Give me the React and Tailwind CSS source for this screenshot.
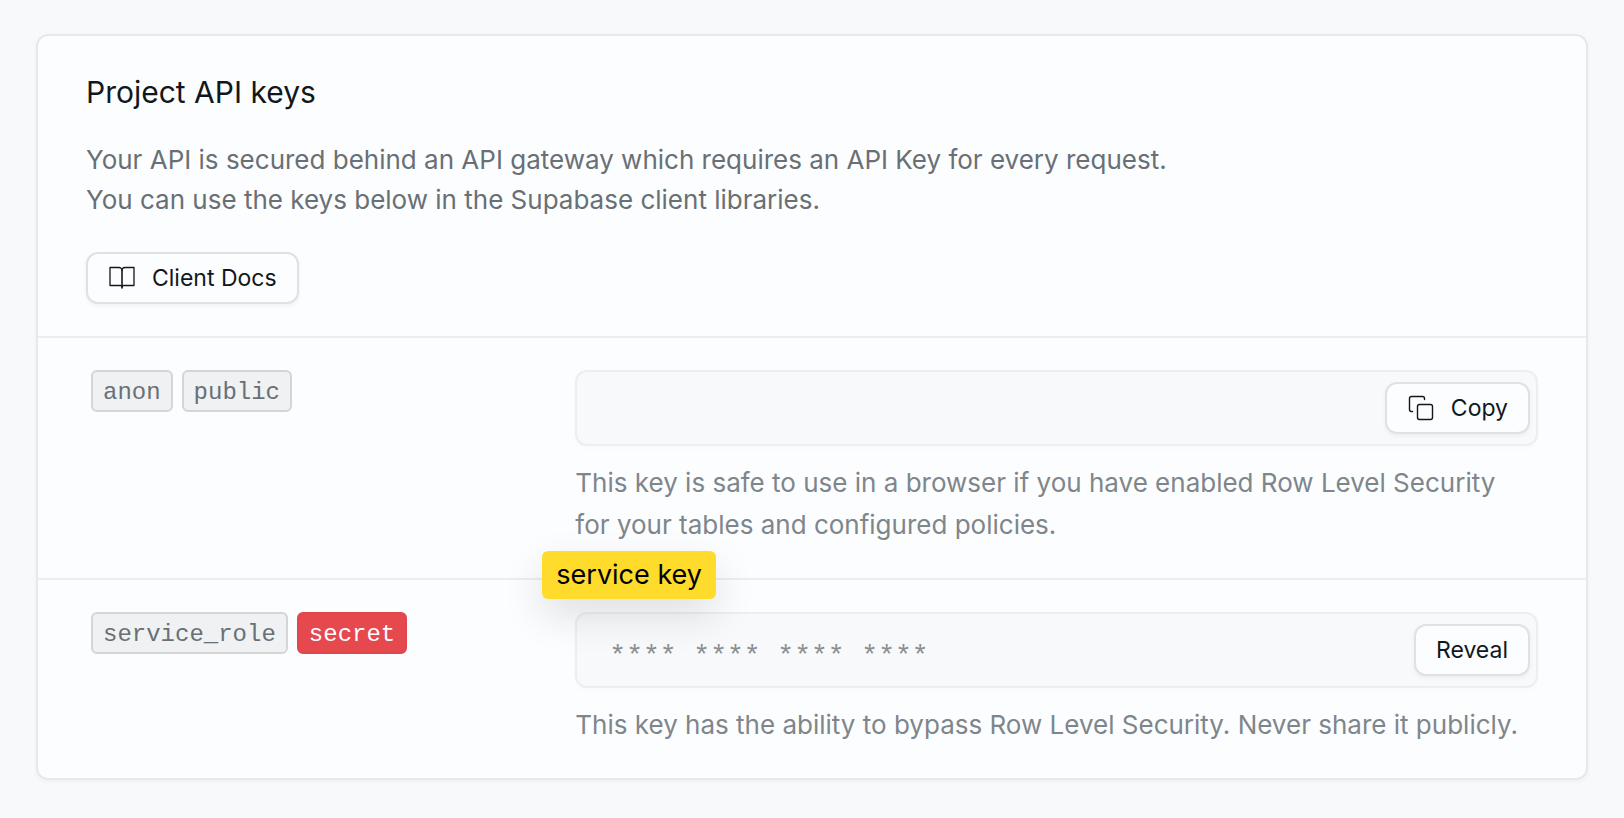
import React from "react";

const SANS = "font-['Inter','Liberation_Sans',sans-serif]";
const MONO = "font-['Liberation_Mono',monospace]";

function BookIcon() {
  return (
    <svg aria-hidden="true" viewBox="0 0 28 28" className="h-7 w-7 shrink-0" fill="none" stroke="currentColor" strokeWidth="1.3" strokeLinejoin="round" strokeLinecap="round">
      <path d="M14 6.500a3 3 0 0 0-3-3H2v18h10.500a1.500 1.500 0 0 1 1.500 1.500 1.500 1.500 0 0 1 1.500-1.500H26v-18h-9a3 3 0 0 0-3 3" />
      <path d="M14 6.500V24" strokeWidth="1.600" />
    </svg>
  );
}

function CopyIcon() {
  return (
    <svg aria-hidden="true" viewBox="0 0 28 28" className="h-7 w-7 shrink-0" fill="none" stroke="currentColor" strokeWidth="1.4" strokeLinecap="round">
      <rect x="10.500" y="10.500" width="15" height="15" rx="2" />
      <path d="M5.500 17.500H4.500a2 2 0 0 1-2-2v-11a2 2 0 0 1 2-2h11a2 2 0 0 1 2 2v1" />
    </svg>
  );
}

function Button({ icon, children }) {
  return (
    <button type="button" className="flex h-[52px] shrink-0 items-center gap-4 rounded-xl border-2 border-[#dfe1e4] bg-[#fcfdfe] px-5 text-[23px] leading-8 text-[#11181c] shadow-[0_2px_4px_rgba(0,0,0,0.05)]">
      {icon}
      {children}
    </button>
  );
}

function Tag({ danger, children }) {
  const tone = danger
    ? "border-[#e0474c] bg-[#e5484d] text-[#fcfdfe]"
    : "border-[#d3d5d6] bg-[#f0f1f2] text-[#687076]";
  return (
    <code className={`${MONO} flex h-[42px] items-center rounded-md border-2 px-[10px] pt-1 text-[24px] leading-8 ${tone}`}>
      {children}
    </code>
  );
}

function KeyRow({ id, tags, value, action, help, children }) {
  return (
    <div className="grid grid-cols-12 gap-4 border-t-2 border-[#ebedef] px-12 py-8">
      <label htmlFor={id} className="col-span-4 flex items-start gap-[9px] pl-[5px]">
        {tags}
      </label>
      <div className="relative col-span-8">
        <div className="flex h-[76px] items-center rounded-xl border-2 border-[#eceef0] bg-[#f8f9fa] pr-1.5 shadow-[0_2px_4px_rgba(0,0,0,0.02)]">
          <input id={id} type="text" readOnly value={value} aria-describedby={`${id}-help`} className={`${MONO} h-full min-w-0 flex-1 bg-transparent pt-3 pl-8 text-[28px] text-[#8b8f91] outline-none`} />
          {action}
        </div>
        <p id={`${id}-help`} className="mt-4 text-[26px] leading-[42px] text-[#7e868c]">
          {help}
        </p>
        {children}
      </div>
    </div>
  );
}

export default function App() {
  return (
    <main className={`${SANS} min-h-screen bg-[#f8f9fb] px-9 pt-[34px] pb-[38px]`}>
      <section className="rounded-xl border-2 border-[#e6e8eb] bg-[#fcfdfe] shadow-[0_2px_4px_rgba(0,0,0,0.04)]">
        <header className="px-12 py-8">
          <h1 className="text-[30px] leading-[48px] text-[#11181c]">Project API keys</h1>
          <p className="mt-6 mb-8 text-[26px] leading-10 text-[#687076]">
            Your API is secured behind an API gateway which requires an API Key for every request.
            <br />
            You can use the keys below in the Supabase client libraries.
          </p>
          <div className="flex">
            <Button icon={<BookIcon />}>Client Docs</Button>
          </div>
        </header>
        <KeyRow
          id="anon-key"
          tags={<><Tag>anon</Tag><Tag>public</Tag></>}
          value=""
          action={<Button icon={<CopyIcon />}>Copy</Button>}
          help={<>This key is safe to use in a browser if you have enabled Row Level Security<br />for your tables and configured policies.</>}
        />
        <KeyRow
          id="service-key"
          tags={<><Tag>service_role</Tag><Tag danger>secret</Tag></>}
          value="**** **** **** ****"
          action={<Button>Reveal</Button>}
          help="This key has the ability to bypass Row Level Security. Never share it publicly."
        >
          <div className="absolute -top-[61px] -left-[33px] flex h-12 items-center rounded-md bg-[#ffdb2c] px-[14px] text-[27px] leading-8 text-black shadow-[0_16px_40px_rgba(0,0,0,0.12)]">
            service key
          </div>
        </KeyRow>
      </section>
    </main>
  );
}
